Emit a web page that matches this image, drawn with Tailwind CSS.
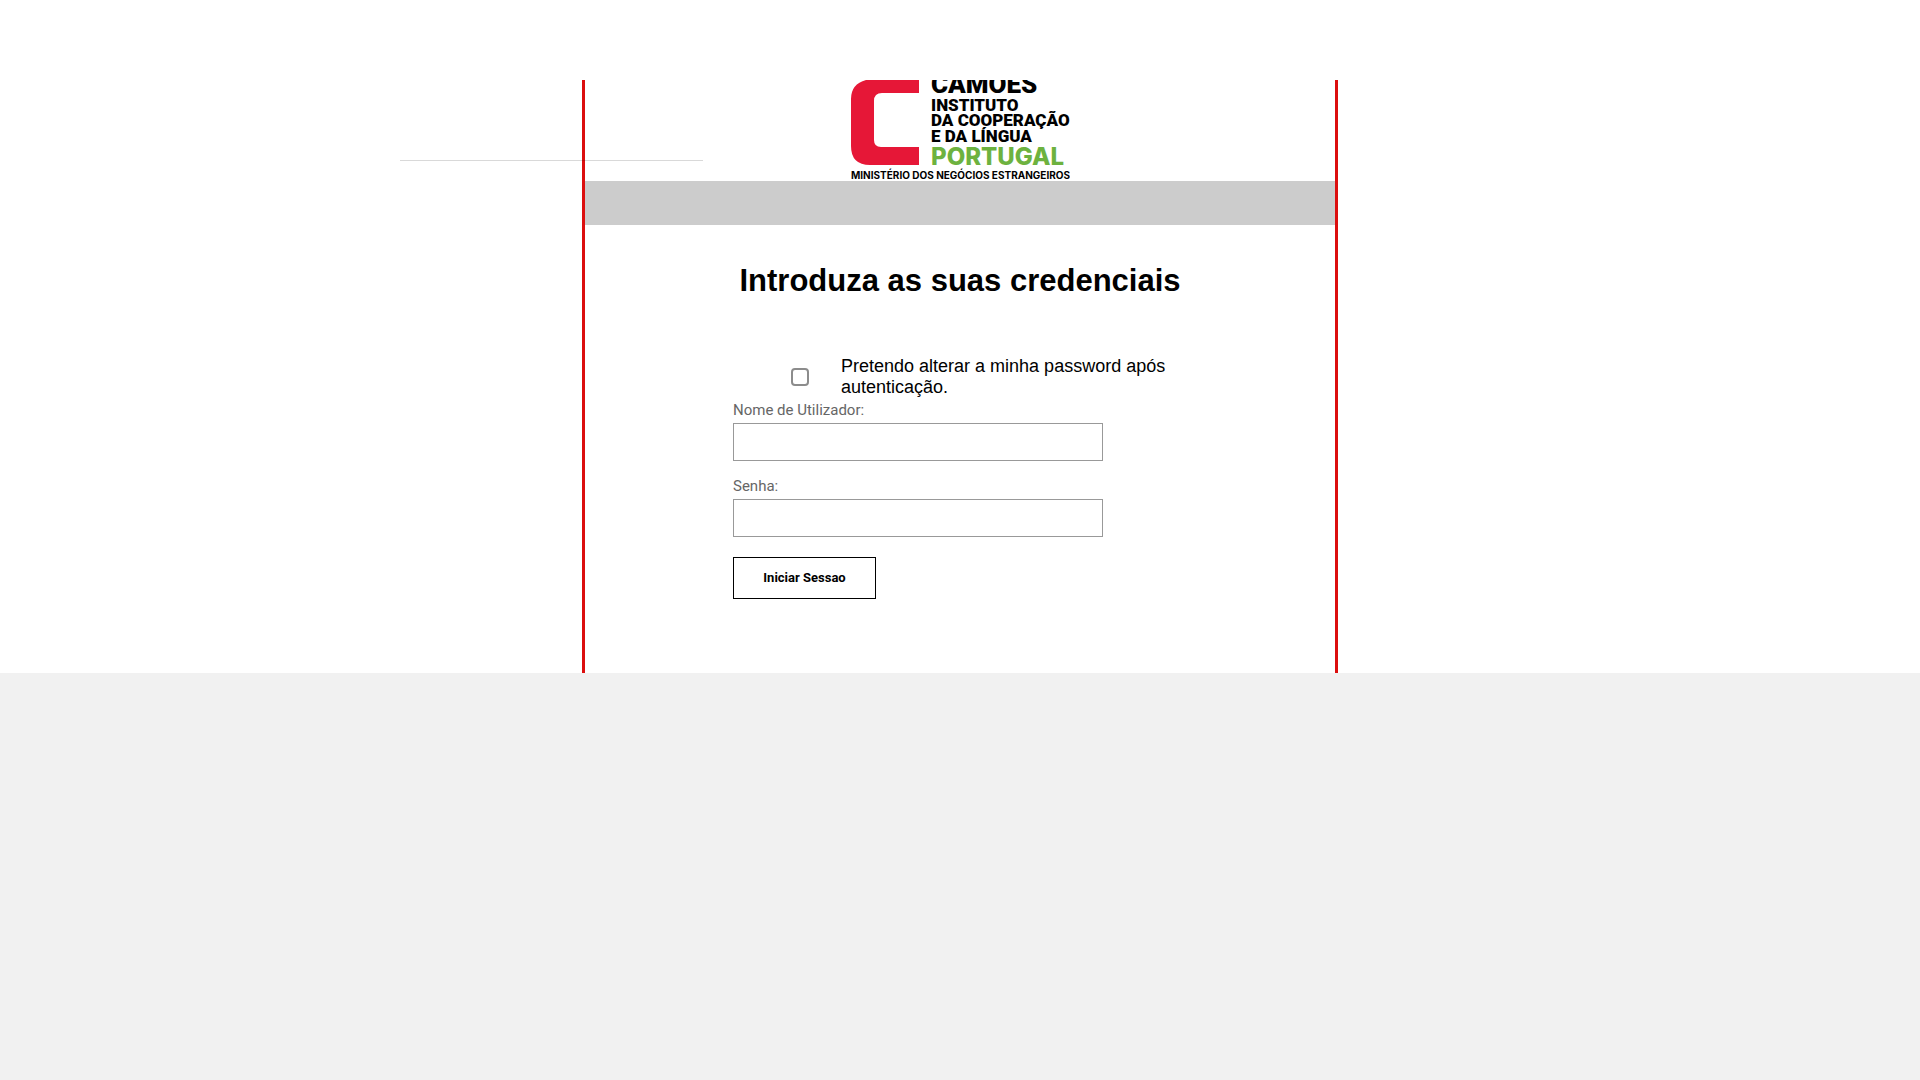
<!DOCTYPE html>
<html lang="pt">
<head>
  <meta charset="UTF-8" />
  <meta name="viewport" content="width=device-width, initial-scale=1.0" />
  <title>Iniciar Sessao</title>
  <script src="https://cdn.jsdelivr.net/npm/@tailwindcss/browser@4"></script>
</head>

<body class="min-h-screen bg-[#f1f1f1] font-['Roboto',sans-serif]">
  <main class="relative bg-white pt-20">

    <!-- Linha separadora por cima do painel -->
    <hr class="absolute left-[400px] top-40 w-[303px] border-t border-black/15">

    <!-- Painel de login -->
    <div class="mx-auto max-w-[756px] border-x-3 border-[#dc0f0f] pb-[74px]">

      <!-- Logotipo -->
      <svg class="mx-auto block h-[101px] w-[220px]" viewBox="-1 0 220 101" role="img" aria-label="Camões" font-family="Roboto, sans-serif">
        <path fill="#e61737" d="M68 0H15Q0 4 0 19V66Q0 85 19 85H68V67H30Q23 67 23 60V21Q23 13 31 13H68Z" />
        <text x="80" y="13" font-size="26" font-weight="900">CAMÕES</text>
        <text x="80" y="31" font-size="17" font-weight="900">INSTITUTO</text>
        <text x="80" y="46" font-size="17" font-weight="900">DA COOPERAÇÃO</text>
        <text x="80" y="62" font-size="17" font-weight="900">E DA LÍNGUA</text>
        <text x="80" y="85" font-size="24" font-weight="800" fill="#6db23f" font-family="Inter, sans-serif">PORTUGAL</text>
        <text x="0" y="99" font-size="10" font-weight="700" font-family="Inter, sans-serif">MINISTÉRIO DOS NEGÓCIOS ESTRANGEIROS</text>
      </svg>

      <div class="h-11 bg-[#ccc]"></div>

      <h1 class="mt-9 text-center font-['Liberation_Sans',sans-serif] text-[31px] leading-10 font-bold">Introduza as suas credenciais</h1>

      <form class="ml-[148px] mt-[55px] w-[450px] max-w-full text-[15px] leading-5 text-[#666]">
        <div class="flex items-center gap-8 pl-[58px]">
          <input id="alterar" type="checkbox" class="size-[18px] shrink-0 appearance-none rounded-[4px] border-2 border-[#8c8c8c] bg-white">
          <label for="alterar" class="font-['Liberation_Sans',sans-serif] text-[18px] leading-[21px] text-black">Pretendo alterar a minha password após autenticação.</label>
        </div>

        <label for="utilizador" class="mt-0.5 block">Nome de Utilizador:</label>
        <input id="utilizador" type="text" class="mt-[3px] block h-[38px] w-[370px] border border-[#999] px-2">

        <label for="senha" class="mt-[15px] block">Senha:</label>
        <input id="senha" type="password" class="mt-[3px] block h-[38px] w-[370px] border border-[#999] px-2">

        <button type="submit" class="mt-5 h-[42px] w-[143px] border border-black text-[13px] font-bold text-black">Iniciar Sessao</button>
      </form>
    </div>
  </main>
</body>
</html>
